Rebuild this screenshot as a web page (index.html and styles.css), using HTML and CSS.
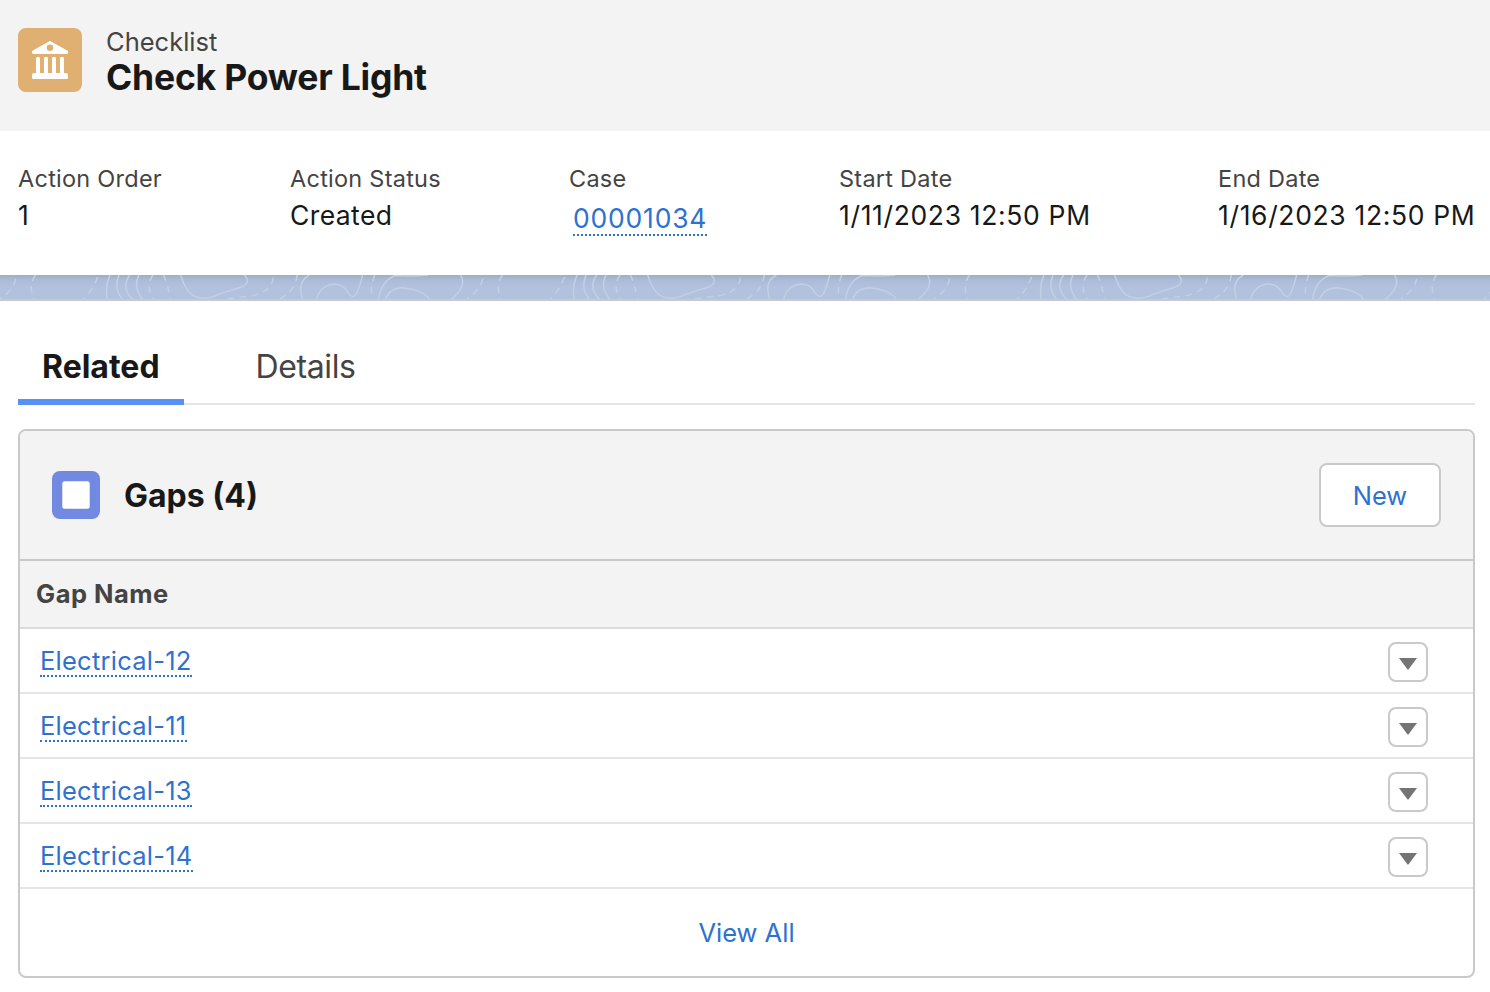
FILE: index.html
```html
<!DOCTYPE html>
<html lang="en">
<head>
<meta charset="utf-8">
<title>Check Power Light</title>
<link rel="stylesheet" href="styles.css">
</head>
<body>
<header class="page-header">
  <svg class="entity-icon" viewBox="0 0 64 64" aria-hidden="true">
    <rect width="64" height="64" rx="8" fill="#e0b072"/>
    <path fill="#fff" fill-rule="evenodd" d="M31 13.400q1-.6 2 0l16.200 9.200q.8.500.8 1.400v.8q0 1.200-1.200 1.200H15.200Q14 26 14 24.800V24q0-.9.800-1.400zM32 16.500a3.300 3.300 0 1 0 0 6.600 3.300 3.300 0 0 0 0-6.600z"/>
    <path fill="#fff" d="M18 30q0-1 1-1h2q1 0 1 1v15h4V30q0-1 1-1h2q1 0 1 1v15h4V30q0-1 1-1h2q1 0 1 1v15h4V30q0-1 1-1h2q1 0 1 1v15h2q2 0 2 2v2.800q0 1.200-1.200 1.200H15.200Q14 51 14 49.800V47q0-2 2-2h2z"/>
  </svg>
  <div class="heading">
    <p class="entity">Checklist</p>
    <h1 class="title">Check Power Light</h1>
  </div>
</header>
<dl class="fields">
  <div class="field order"><dt>Action Order</dt><dd>1</dd></div>
  <div class="field status"><dt>Action Status</dt><dd>Created</dd></div>
  <div class="field case"><dt>Case</dt><dd><a class="link" href="#">00001034</a></dd></div>
  <div class="field date"><dt>Start Date</dt><dd>1/11/2023 12:50 PM</dd></div>
  <div class="field date"><dt>End Date</dt><dd>1/16/2023 12:50 PM</dd></div>
</dl>
<div class="band">
  <svg class="contours" width="1490" height="24" aria-hidden="true">
    <defs>
      <linearGradient id="shade" x1="0" y1="0" x2="0" y2="1">
        <stop offset="0" stop-color="#9eadc9"/>
        <stop offset=".2" stop-color="#abbad7"/>
        <stop offset=".5" stop-color="#b1c1de"/>
      </linearGradient>
      <g id="lines" fill="none" stroke="#c3cfe4" stroke-width="4.500" transform="scale(.33333)">
        <path stroke-dasharray="20 16" d="M47 12Q38 50 0 70M106 0Q84 35 102 72M293 6Q275 50 250 72M459 0Q435 35 460 72M490 0Q503 25 511 72M819 8Q820 45 760 62Q720 66 680 72M892 0Q885 50 838 72M1124 0Q1110 35 1116 72"/>
        <path d="M330 0Q314 35 322 72M357 0Q340 40 367 72M389 0Q362 38 397 72M417 0Q398 35 427 72M542 0Q562 66 600 68Q632 72 655 58L725 36Q755 22 733 0M928 0Q890 20 908 72M950 72Q962 30 1003 27Q1030 28 1042 50Q1055 72 1067 60Q1075 50 1088 0M1190 0Q1144 15 1136 72M1180 0Q1220 6 1285 0M1157 72Q1170 38 1208 38Q1270 45 1288 72M1382 0Q1402 35 1355 72"/>
      </g>
    </defs>
    <rect width="1490" height="24" fill="url(#shade)"/>
    <use href="#lines"/>
    <use href="#lines" x="467"/>
    <use href="#lines" x="934"/>
    <use href="#lines" x="1401"/>
  </svg>
</div>
<main class="content">
  <nav class="tabs">
    <a class="tab active" href="#">Related</a>
    <a class="tab" href="#">Details</a>
  </nav>
  <section class="card">
    <div class="card-header">
      <svg class="card-icon" viewBox="0 0 48 48" aria-hidden="true">
        <rect width="48" height="48" rx="8" fill="#7189e0"/>
        <rect x="10.300" y="10.300" width="27.400" height="27.400" rx="2.500" fill="#fff"/>
      </svg>
      <h2 class="card-title">Gaps (4)</h2>
      <button class="new-button">New</button>
    </div>
    <div class="column-header">Gap Name</div>
    <ul class="rows">
      <li class="row"><a class="link" href="#">Electrical-12</a><button class="menu-button" aria-label="Actions"><svg width="18" height="12" viewBox="0 0 18 12"><path d="M0 0h18L9.800 11q-.8 1-1.600 0z" fill="#747474"/></svg></button></li>
      <li class="row"><a class="link" href="#">Electrical-11</a><button class="menu-button" aria-label="Actions"><svg width="18" height="12" viewBox="0 0 18 12"><path d="M0 0h18L9.800 11q-.8 1-1.600 0z" fill="#747474"/></svg></button></li>
      <li class="row"><a class="link" href="#">Electrical-13</a><button class="menu-button" aria-label="Actions"><svg width="18" height="12" viewBox="0 0 18 12"><path d="M0 0h18L9.800 11q-.8 1-1.600 0z" fill="#747474"/></svg></button></li>
      <li class="row"><a class="link" href="#">Electrical-14</a><button class="menu-button" aria-label="Actions"><svg width="18" height="12" viewBox="0 0 18 12"><path d="M0 0h18L9.800 11q-.8 1-1.600 0z" fill="#747474"/></svg></button></li>
    </ul>
    <a class="view-all" href="#">View All</a>
  </section>
</main>
</body>
</html>
```
FILE: styles.css
```css
* { box-sizing: border-box; }
body {
  margin: 0;
  background: #fff;
  color: #181818;
  font-family: Inter, "Liberation Sans", sans-serif;
  font-size: 25.5px;
}
h1, h2, p, dl, dd, ul { margin: 0; padding: 0; }
a { color: #2e72cf; text-decoration: none; }
button { font: inherit; padding: 0; background: #fff; border: 2px solid #c9c9c9; }

.page-header {
  display: flex;
  gap: 24px;
  height: 131px;
  padding: 28px 18px 0;
  background: #f3f3f3;
}
.entity-icon { width: 64px; height: 64px; }
.entity { font-size: 25.5px; line-height: 28px; color: #444; }
.title { font-size: 35.5px; line-height: 44px; font-weight: 700; letter-spacing: -0.2px; }

.fields {
  display: grid;
  grid-template-columns: 272px 279px 270px 379px auto;
  height: 144px;
  padding: 32px 0 0 18px;
  white-space: nowrap;
}
.field dt { font-size: 23.5px; line-height: 32px; letter-spacing: 0.25px; color: #444; }
.field dd { font-size: 26.5px; line-height: 40px; letter-spacing: 0.4px; }
.date dd { letter-spacing: 0.65px; }
.case dd { padding: 3px 0 0 4px; letter-spacing: 0.8px; }

.link { display: inline-block; line-height: 31px; border-bottom: 2px dotted #2e72cf; }

.band { height: 26px; border-bottom: 2px solid #c9c9c9; }
.contours { display: block; }

.content { padding: 24px 15px 14px 18px; }
.tabs { display: flex; height: 80px; border-bottom: 2px solid #e5e5e5; }
.tab {
  height: 80px;
  padding: 0 24px;
  margin-right: 48px;
  font-size: 32px;
  line-height: 84px;
  letter-spacing: -0.4px;
  color: #444;
}
.tab.active { border-bottom: 6px solid #5791f3; color: #181818; font-weight: 700; letter-spacing: 0; }

.card { margin-top: 24px; border: 2px solid #c9c9c9; border-radius: 8px; overflow: hidden; height: 549px; }
.card-header {
  display: flex;
  align-items: center;
  height: 130px;
  padding: 0 32px;
  background: #f3f3f3;
  border-bottom: 2px solid #c9c9c9;
}
.card-icon { width: 48px; height: 48px; }
.card-title { margin-left: 24px; font-size: 32px; font-weight: 700; }
.new-button { width: 122px; height: 64px; margin-left: auto; border-radius: 8px; color: #2e72cf; }
.column-header {
  height: 68px;
  padding-left: 16px;
  background: #f3f3f3;
  border-bottom: 2px solid #dddbda;
  color: #444;
  font-weight: 700;
  letter-spacing: 0.5px;
  line-height: 66px;
}
.rows { list-style: none; }
.row {
  display: flex;
  align-items: center;
  justify-content: space-between;
  height: 65px;
  padding: 3px 45px 0 20px;
  border-bottom: 2px solid #e5e5e5;
}
.row .link { margin-top: -3px; padding-top: 2px; line-height: 29px; letter-spacing: 0.25px; }
.menu-button { display: grid; place-items: center; width: 40px; height: 40px; padding-top: 3px; border-radius: 8px; }
.view-all { display: block; line-height: 88px; text-align: center; }
```
